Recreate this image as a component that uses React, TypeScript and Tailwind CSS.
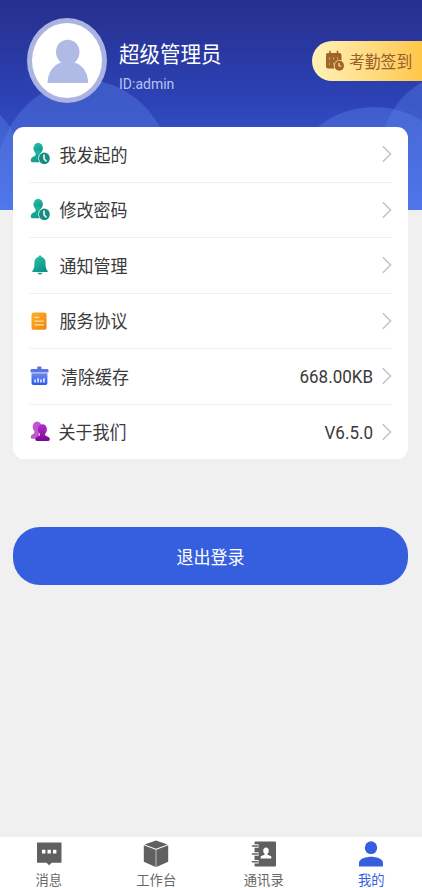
import type { ReactNode } from "react";

const UserClock = () => (
  <svg viewBox="0 0 20 22" className="h-[24px] w-[22px]">
    <defs>
      <linearGradient id="teal" x1="0" y1="0" x2="0.5" y2="1">
        <stop offset="0" stopColor="#22c5ae" />
        <stop offset="1" stopColor="#129488" />
      </linearGradient>
    </defs>
    <ellipse cx="8.300" cy="5.800" rx="4.300" ry="5" fill="url(#teal)" />
    <path d="M6 8h4.500v4l3 2v4.500H2.800Q1.500 18.500 1.500 17c0-2.600 1.500-3.300 3.200-4C6.200 12.400 6.200 11 6 8z" fill="url(#teal)" />
    <ellipse cx="14" cy="15" rx="5.600" ry="6" fill="#fff" />
    <ellipse cx="14" cy="15" rx="5" ry="5.400" fill="#168c82" />
    <path d="M13.700 12v3.400l1.800 2" fill="none" stroke="#fff" strokeWidth="1.400" strokeLinecap="round" />
  </svg>
);

const Bell = () => (
  <svg viewBox="0 0 20 22" className="h-[24px] w-[22px]">
    <path d="M10 2.300c.9 0 1.400.6 1.400 1.400C14.100 4.400 15.100 6.500 15.100 9c0 4 .3 5.500 1.900 7.400v1H3v-1C4.600 14.500 4.900 13 4.900 9c0-2.500 1-4.600 3.700-5.300C8.600 2.900 9.100 2.300 10 2.300z" fill="url(#teal)" />
    <path d="M7.800 18.200h4.400c-.3 1-1.200 1.600-2.200 1.600s-1.900-.6-2.200-1.600z" fill="#16a394" />
  </svg>
);

const Doc = () => (
  <svg viewBox="0 0 20 22" className="h-[24px] w-[22px]">
    <defs>
      <linearGradient id="orange" x1="0" y1="0" x2="1" y2="1">
        <stop offset="0" stopColor="#ffb02b" />
        <stop offset="1" stopColor="#ed850d" />
      </linearGradient>
    </defs>
    <rect x="2.200" y="3.300" width="13.800" height="15.800" rx="2" fill="url(#orange)" />
    <path d="M4.800 7.600h4.500M4.800 11.100h8.700M5.300 14.500h8.200" stroke="#ffe1a0" strokeWidth="1.200" />
  </svg>
);

const Trash = () => (
  <svg viewBox="0 0 20 22" className="h-[24px] w-[22px]">
    <defs>
      <linearGradient id="blue" x1="0" y1="0" x2="0" y2="1">
        <stop offset="0" stopColor="#7089ed" />
        <stop offset="1" stopColor="#2a58f0" />
      </linearGradient>
    </defs>
    <path d="M7.400 4.500V3.200Q7.400 2.300 8.200 2.300h2.400q.8 0 .8.900v1.300h5.200q1.200 0 1.200 1.200v1.500q0 .7-.7.700H2q-.7 0-.7-.7V5.700Q1.300 4.500 2.500 4.500z" fill="#5874e5" />
    <path d="M2.200 8.500h14.600v9q0 1.800-1.800 1.800H4q-1.800 0-1.800-1.800z" fill="url(#blue)" />
    <path d="M5.500 14.200v2.700M8.200 13v3.900M10.900 14.200v2.700M13.600 13v3.900" stroke="#fff" strokeWidth="1.300" />
  </svg>
);

const People = () => (
  <svg viewBox="0 0 20 22" className="h-[24px] w-[22px]">
    <defs>
      <linearGradient id="purple" x1="0" y1="0" x2="0" y2="1">
        <stop offset="0" stopColor="#b52bd0" />
        <stop offset="1" stopColor="#7b0796" />
      </linearGradient>
    </defs>
    <ellipse cx="7.400" cy="6.300" rx="4.100" ry="4.900" fill="#bd59cb" />
    <path d="M5 8h4v9.300H3Q1.500 17.300 1.500 15.800c0-2 1.500-2.700 2.800-3.200Q5.500 11.500 5 8z" fill="#bd59cb" />
    <path d="M12.200 3.800c2.600 0 4.100 2 4.100 4.700 0 2-.7 3.500-1.800 4.400 0 1.300.6 1.500 1.800 1.900 1.700.5 2.700 1.300 2.700 2.900 0 1-.5 1.600-1.500 1.600H7.200c-1 0-1.500-.6-1.500-1.600 0-1.600 1-2.400 2.700-2.900 1.200-.4 1.600-.6 1.600-1.900-1.100-.9-1.900-2.400-1.900-4.400 0-2.700 1.500-4.700 4.100-4.700z" fill="url(#purple)" />
  </svg>
);

const CalendarClock = () => (
  <svg viewBox="0 0 20 22" className="h-[22px] w-5">
    <path d="M2.500 3h12q2 0 2 2v6H11v7.500H3q-2 0-2-2V5q0-2 1.500-2z" fill="#a0632a" />
    <path d="M5 .8v4M12.500 .8v4" stroke="#a0632a" strokeWidth="1.600" />
    <path d="M4.500 7v3M8.500 7v3M12.500 7v3M4.500 12.500v3M8.500 12.500v3" stroke="#d4a05c" strokeWidth=".9" />
    <ellipse cx="14.300" cy="15.700" rx="5.500" ry="5.700" fill="#ffe497" />
    <ellipse cx="14.300" cy="15.700" rx="4.700" ry="5" fill="#a0632a" />
    <path d="M14 13v3h2.300" fill="none" stroke="#ffe497" strokeWidth="1.200" />
  </svg>
);

const Chevron = () => (
  <svg viewBox="0 0 10 18" className="ml-[9px] h-[18px] w-2.5 shrink-0">
    <path d="M.8 1.200l7.800 7.800-7.800 7.800" fill="none" stroke="#c2c2c2" strokeWidth="1.500" />
  </svg>
);

const Chat = () => (
  <svg viewBox="0 0 26 28" className="h-7 w-[26px]">
    <path d="M1 2.500h24.500v20.300h-9.700L13.200 25.300 10.500 22.800H1z" fill="#606060" />
    <path d="M6 9.700h3.400v3.700H6zM11.500 9.700h3.400v3.700h-3.400zM17 9.700h3.400v3.700H17z" fill="#fff" />
  </svg>
);

const Cube = () => (
  <svg viewBox="0 0 26 28" className="h-7 w-[26px]">
    <path d="M13 .5l11.500 4L13 8.800 1.500 4.500z" fill="#606060" />
    <path d="M.8 5.200l11.900 4.500V27L.8 21.800zM25.200 5.200L13.300 9.700V27l11.900-5.200z" fill="#606060" />
  </svg>
);

const AddressBook = () => (
  <svg viewBox="0 0 26 28" className="h-7 w-[26px]">
    <rect x="3.500" y="1.500" width="21.500" height="25" rx="1" fill="#606060" />
    <path d="M1 6h6.500M1 14h6.500M1 21.800h6.500" stroke="#fff" strokeWidth="3.600" />
    <path d="M1.500 6h5M1.500 14h5M1.500 21.800h5" stroke="#606060" strokeWidth="1.600" strokeLinecap="round" />
    <path d="M15 7.500c1.800 0 2.800 1.300 2.800 3.200 0 1.300-.5 2.300-1.300 2.900v1.200l3.800 1.500v2.300H9.700v-2.300l3.800-1.500v-1.200c-.8-.6-1.300-1.600-1.300-2.900 0-1.900 1-3.200 2.800-3.200z" fill="#fff" />
  </svg>
);

const Person = () => (
  <svg viewBox="0 0 26 28" className="h-7 w-[26px]">
    <ellipse cx="13" cy="7.700" rx="6.200" ry="6.400" fill="#365fe0" />
    <path d="M1 26.400v-3.600C1 18.800 8 16.800 13 16.800s12 2 12 6v3.600z" fill="#365fe0" />
  </svg>
);

type Row = { label: string; icon: ReactNode; value?: string; gap: string };

const rows: Row[] = [
  { label: "我发起的", icon: <UserClock />, gap: "ml-[8.5px]" },
  { label: "修改密码", icon: <UserClock />, gap: "ml-[8.5px]" },
  { label: "通知管理", icon: <Bell />, gap: "ml-[8.5px]" },
  { label: "服务协议", icon: <Doc />, gap: "ml-[8.5px]" },
  { label: "清除缓存", icon: <Trash />, value: "668.00KB", gap: "ml-[10px]" },
  { label: "关于我们", icon: <People />, value: "V6.5.0", gap: "ml-[7.5px]" },
];

const tabs = [
  { label: "消息", icon: <Chat />, color: "text-[#686868]" },
  { label: "工作台", icon: <Cube />, color: "text-[#686868]" },
  { label: "通讯录", icon: <AddressBook />, color: "text-[#686868]" },
  { label: "我的", icon: <Person />, color: "text-[#365fe0]" },
];

export default function App() {
  return (
    <div className="relative isolate flex h-[888px] w-[422px] flex-col overflow-hidden bg-[#f0f0f0] font-[Roboto,'Noto_Sans_CJK_SC',sans-serif]">
      <svg viewBox="0 0 422 210" className="absolute top-0 left-0 -z-10 h-[210px] w-[422px]">
        <defs>
          <linearGradient id="sky" x1="0" y1="0" x2="0" y2="1">
            <stop offset="0" stopColor="#262f8d" />
            <stop offset="0.5" stopColor="#2d43b8" />
            <stop offset="1" stopColor="#486fe5" />
          </linearGradient>
          <linearGradient id="glow" x1="0" y1="0" x2="0" y2="1">
            <stop offset="0" stopColor="#5b83e4" stopOpacity=".4" />
            <stop offset="0.6" stopColor="#5b83f4" stopOpacity=".25" />
            <stop offset="1" stopColor="#5b83f4" stopOpacity=".05" />
          </linearGradient>
        </defs>
        <rect width="422" height="210" fill="url(#sky)" />
        <ellipse cx="85" cy="185" rx="90" ry="105" fill="url(#glow)" />
        <ellipse cx="-34" cy="192" rx="62" ry="92" fill="url(#glow)" />
        <ellipse cx="374" cy="187" rx="85" ry="80" fill="url(#glow)" />
        <ellipse cx="458" cy="156" rx="78" ry="83" fill="url(#glow)" />
      </svg>

      <header className="flex h-[127px] shrink-0 items-start">
        <div className="mt-[18px] ml-[27px] flex h-[85px] w-20 shrink-0 items-center justify-center rounded-[50%] bg-[#abb3e0]">
          <svg viewBox="0 0 70 75" className="h-[75px] w-[70px] rounded-[50%] bg-white">
            <path d="M15.500 60C16 48 22 42 29 39.500 26 37 24 33.500 24 29c0-7 5-12.300 11.700-12.300S47.500 22 47.500 29c0 4.500-2 8-5 10.500C50 42 55.800 48 56.200 60z" fill="#b0bbe5" />
          </svg>
        </div>
        <div className="mt-[39px] ml-3 flex flex-col whitespace-nowrap">
          <h1 className="origin-center scale-y-[1.05] text-[20.5px] leading-8 text-white">超级管理员</h1>
          <p className="mt-[3px] origin-center scale-y-[1.08] text-[14px] leading-5 text-[#b9c4ed]">ID:admin</p>
        </div>
        <button className="mt-[41px] ml-auto flex h-10 w-[110px] items-center rounded-l-full bg-linear-to-r from-[#fff2b6] to-[#ffc746] pl-[13px] whitespace-nowrap text-[#985e2d]">
          <CalendarClock />
          <span className="mt-[3px] ml-1 scale-y-[1.06] text-[15.800px] leading-6">考勤签到</span>
        </button>
      </header>

      <main className="flex flex-1 flex-col pr-[14px] pl-[13px]">
        <section className="flex h-[332px] shrink-0 flex-col rounded-[11px] bg-white px-4">
          {rows.map((row) => (
            <div key={row.label} className="flex flex-1 items-center border-b border-[#f0f0f0] text-[17px] whitespace-nowrap text-[#3a3a3a] last:border-b-0">
              {row.icon}
              <span className={`${row.gap} mt-[3px] scale-y-[1.06] leading-6`}>{row.label}</span>
              <span className="ml-auto origin-center scale-y-[1.120] text-[17px] leading-6">{row.value}</span>
              <Chevron />
            </div>
          ))}
        </section>
        <button className="mt-[68px] flex h-[58px] shrink-0 items-center justify-center rounded-[27px] bg-[#365fe0] text-[17px] text-white">
          <span className="mt-[5px] scale-y-[1.06]">退出登录</span>
        </button>
      </main>

      <nav className="flex h-[51px] shrink-0 bg-white">
        <div className="-ml-[5px] grid w-[430px] shrink-0 grid-cols-4">
          {tabs.map((tab) => (
            <div key={tab.label} className={`flex flex-col items-center pt-[3px] ${tab.color}`}>
              {tab.icon}
              <span className="mt-[3px] scale-y-[1.05] text-[13.300px] leading-5 whitespace-nowrap">{tab.label}</span>
            </div>
          ))}
        </div>
      </nav>
    </div>
  );
}
